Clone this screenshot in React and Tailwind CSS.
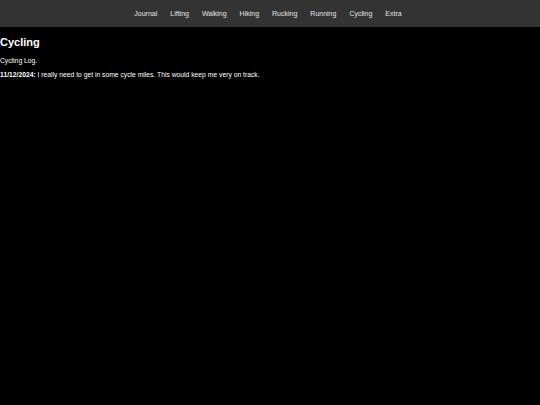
const links = ['Journal', 'Lifting', 'Walking', 'Hiking', 'Rucking', 'Running', 'Cycling', 'Extra'];

export default function App() {
  return (
    <div className="min-h-[405px] bg-black text-white" style={{ fontFamily: '"Liberation Sans", Arial, sans-serif' }}>
      <nav className="h-[27px] bg-[#333333] flex items-center justify-center pr-[4px]">
        <ul className="flex text-[7px] leading-none">
          {links.map((l) => (
            <li key={l}>
              <a href="#" className="px-[6.5px] text-[#e6e6e6]">{l}</a>
            </li>
          ))}
        </ul>
      </nav>
      <main>
        <h1 className="text-[11px] font-bold mt-[9px] leading-tight">Cycling</h1>
        <p className="text-[6.75px] mt-[6px]">Cycling Log.</p>
        <p className="text-[6.75px] mt-[4px]">
          <b>11/12/2024:</b> I really need to get in some cycle miles. This would keep me very on track.
        </p>
      </main>
    </div>
  );
}
